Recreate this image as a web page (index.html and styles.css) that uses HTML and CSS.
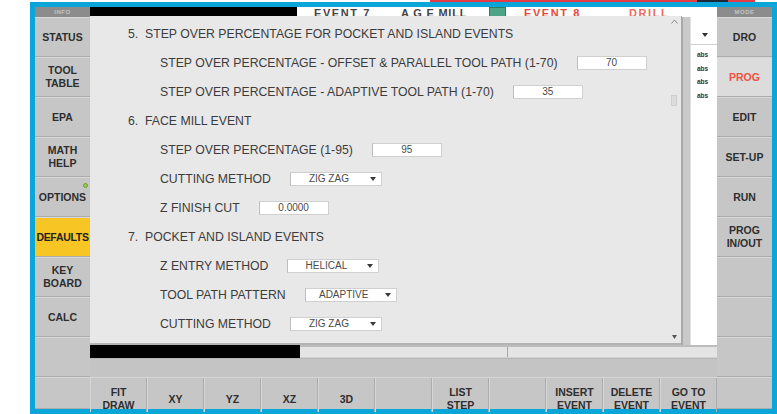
FILE: index.html
```html
<!DOCTYPE html>
<html lang="en">
<head>
<meta charset="utf-8">
<title>Program Defaults</title>
<link rel="stylesheet" href="styles.css">
</head>
<body>
<div class="topline"><span class="tl-blank"></span><span class="tl-red tl-a"></span><span class="tl-dark"></span><span class="tl-red tl-b"></span></div>
<div class="frame">
  <nav class="side">
    <div class="side-head">INFO</div>
    <div class="key">STATUS</div>
    <div class="key">TOOL<br>TABLE</div>
    <div class="key">EPA</div>
    <div class="key">MATH<br>HELP</div>
    <div class="key">OPTIONS<span class="dot"></span></div>
    <div class="key active">DEFAULTS</div>
    <div class="key">KEY<br>BOARD</div>
    <div class="key">CALC</div>
    <div class="key"></div>
    <div class="key tail"></div>
  </nav>

  <main class="center">
    <div class="topbar">
      <div class="tb-black"></div>
      <div class="tb-info">
        <span class="ev ev-cur">EVENT 7</span>
        <span class="ev ev-kind">A G E MILL</span>
        <span class="ev-flag"></span>
        <span class="ev ev-next">EVENT 8</span>
        <span class="ev ev-kind next">DRILL</span>
      </div>
    </div>

    <div class="workspace">
      <div class="prog-list">
        <div class="pl-bar"></div>
        <div class="pl-body">
          <div class="pl-drop"><span class="caret"></span></div>
          <div class="pl-row">abs</div>
          <div class="pl-row">abs</div>
          <div class="pl-row">abs</div>
          <div class="pl-row">abs</div>
        </div>
      </div>
    </div>

    <div class="statusbar">
      <div class="sb-black"></div>
      <div class="sb-track"><div class="sb-fill"></div></div>
    </div>
    <div class="band"></div>

    <div class="softkeys">
      <div class="sk">FIT<br>DRAW</div>
      <div class="sk">XY</div>
      <div class="sk">YZ</div>
      <div class="sk">XZ</div>
      <div class="sk">3D</div>
      <div class="sk"></div>
      <div class="sk">LIST<br>STEP</div>
      <div class="sk"></div>
      <div class="sk">INSERT<br>EVENT</div>
      <div class="sk">DELETE<br>EVENT</div>
      <div class="sk">GO TO<br>EVENT</div>
    </div>

    <section class="dialog">
      <div class="dlg-body">
        <div class="row head">5.&nbsp; STEP OVER PERCENTAGE FOR POCKET AND ISLAND EVENTS</div>
        <div class="row"><span>STEP OVER PERCENTAGE - OFFSET &amp; PARALLEL TOOL PATH (1-70)</span><span class="field">70</span></div>
        <div class="row"><span>STEP OVER PERCENTAGE - ADAPTIVE TOOL PATH (1-70)</span><span class="field">35</span></div>
        <div class="row head">6.&nbsp; FACE MILL EVENT</div>
        <div class="row"><span>STEP OVER PERCENTAGE (1-95)</span><span class="field">95</span></div>
        <div class="row"><span>CUTTING METHOD</span><span class="field pick">ZIG ZAG</span></div>
        <div class="row"><span>Z FINISH CUT</span><span class="field">0.0000</span></div>
        <div class="row head">7.&nbsp; POCKET AND ISLAND EVENTS</div>
        <div class="row"><span>Z ENTRY METHOD</span><span class="field pick">HELICAL</span></div>
        <div class="row"><span>TOOL PATH PATTERN</span><span class="field pick">ADAPTIVE</span></div>
        <div class="row"><span>CUTTING METHOD</span><span class="field pick">ZIG ZAG</span></div>
      </div>
      <div class="dlg-scroll">
        <svg class="sc-arrow" width="7" height="5" viewBox="0 0 7 5"><path d="M0.5 4.5 L3.5 1 L6.5 4.5" fill="none" stroke="#8a8a8a" stroke-width="1"/></svg>
        <div class="sc-thumb"></div>
        <svg class="sc-arrow down" width="5" height="4" viewBox="0 0 5 4"><path d="M0 0 H5 L2.5 4 Z" fill="#555"/></svg>
      </div>
    </section>
  </main>

  <nav class="side">
    <div class="side-head">MODE</div>
    <div class="key">DRO</div>
    <div class="key current">PROG</div>
    <div class="key">EDIT</div>
    <div class="key">SET-UP</div>
    <div class="key">RUN</div>
    <div class="key">PROG<br>IN/OUT</div>
    <div class="key"></div>
    <div class="key"></div>
    <div class="key"></div>
    <div class="key tail"></div>
  </nav>
</div>
</body>
</html>
```

FILE: styles.css
```css
* { box-sizing: border-box; }

html, body { margin: 0; padding: 0; }

body {
  width: 777px;
  height: 414px;
  overflow: hidden;
  background: #fff;
  font-family: "Liberation Sans", Arial, sans-serif;
}

/* thin accent strip above the console */
.topline { display: flex; height: 2px; }
.tl-blank { width: 430px; }
.tl-red { background: #e63a45; }
.tl-a { width: 267px; }
.tl-dark { width: 31px; background: #1c2a38; }
.tl-b { width: 27px; }

/* console frame */
.frame {
  margin-left: 30px;
  width: 747px;
  height: 412px;
  border: 5px solid #0ba6d9;
  display: grid;
  grid-template-columns: 55px 1fr 55px;
  grid-template-rows: 100%;
  background: #c6c6c6;
}

/* side key columns */
.side { display: flex; flex-direction: column; overflow: hidden; }

.side-head {
  height: 10px;
  flex: none;
  background: #8c8c8c;
  color: #c4c4c4;
  font-size: 6px;
  font-weight: bold;
  line-height: 10px;
  text-align: center;
  letter-spacing: 0.5px;
}

.key {
  position: relative;
  height: 40px;
  flex: none;
  display: flex;
  align-items: center;
  justify-content: center;
  text-align: center;
  white-space: nowrap;
  font-size: 10.5px;
  font-weight: bold;
  line-height: 13px;
  color: #2e2e2e;
  background: #c6c6c6;
  border-top: 1px solid #d7d7d7;
  border-bottom: 1px solid #acacac;
}

.key.tail { flex: 1; height: auto; }
.key.active { background: #f8c624; color: #222; letter-spacing: -0.3px; }
.key.current { background: #dcdcdc; color: #ee5243; }

.dot {
  position: absolute;
  right: 2px;
  top: 5px;
  width: 5px;
  height: 5px;
  border-radius: 50%;
  background: #9bd04a;
  border: 1px solid #6e9c2e;
}

/* centre column */
.center {
  position: relative;
  display: flex;
  flex-direction: column;
  min-width: 0;
  height: 402px;
}

.topbar {
  height: 10px;
  flex: none;
  display: flex;
  background: #fff;
}

.tb-black { width: 208px; background: #000; }

.tb-info {
  flex: 1;
  display: flex;
  padding-left: 17px;
  font-size: 11px;
  font-weight: bold;
  line-height: 13px;
  white-space: nowrap;
}

.ev { letter-spacing: 1.6px; color: #444; }
.ev-cur { width: 87px; }
.ev-kind { width: 88px; letter-spacing: 0.8px; }
.ev-flag {
  width: 17px;
  height: 10px;
  margin-right: 18px;
  background: #4da487;
  border: 1px solid #2f7d63;
}
.ev-next { width: 105px; color: #e8473c; }
.ev-kind.next { color: #ee6a5e; letter-spacing: 1.6px; }

.workspace {
  height: 328px;
  flex: none;
  display: flex;
  justify-content: flex-end;
  background: #e8e8e8;
}

.prog-list { width: 35px; display: flex; }
.pl-bar {
  width: 9px;
  background: #c9c9c9;
  border-left: 1px solid #a8a8a8;
  border-right: 1px solid #e0e0e0;
}
.pl-body { flex: 1; background: #fff; }
.pl-drop {
  height: 28px;
  display: flex;
  align-items: flex-end;
  justify-content: flex-end;
  padding: 0 9px 7px 0;
  border-bottom: 1px solid #d0d0d0;
}
.caret {
  width: 0;
  height: 0;
  border-left: 3px solid transparent;
  border-right: 3px solid transparent;
  border-top: 4px solid #333;
}
.pl-body .pl-drop + .pl-row { margin-top: 3px; }
.pl-row {
  height: 13.5px;
  line-height: 13.5px;
  padding-left: 6px;
  font-size: 6.5px;
  font-weight: bold;
  color: #333;
}

.statusbar { height: 13px; flex: none; display: flex; }
.sb-black { width: 210px; background: #000; }
.sb-track {
  flex: 1;
  background: #e4e4e4;
  border-top: 2px solid #bcbcbc;
  border-bottom: 1px solid #d2d2d2;
}
.sb-fill { width: 208px; height: 100%; border-right: 1px solid #a5a5a5; }

.band {
  height: 19px;
  flex: none;
  background: #c4c4c4;
  border-top: 1px solid #b5b5b5;
}

.softkeys {
  height: 32px;
  flex: none;
  display: grid;
  grid-template-columns: repeat(11, 1fr);
  border-top: 1px solid #d6d6d6;
}

.sk {
  display: flex;
  align-items: center;
  justify-content: center;
  padding-top: 8px;
  text-align: center;
  white-space: nowrap;
  font-size: 10.5px;
  font-weight: bold;
  line-height: 13px;
  color: #2e2e2e;
  border-left: 1px solid #d6d6d6;
  border-right: 1px solid #adadad;
}

/* defaults dialog, floating over the program view */
.dialog {
  position: absolute;
  top: 9px;
  left: 0;
  width: 592px;
  height: 329px;
  display: flex;
  background: #e8e8e8;
  border-right: 1px solid #a9a9a9;
  border-bottom: 2px solid #b4b4b4;
}

.dlg-body { flex: 1; padding-top: 3px; }

.row {
  height: 29px;
  display: flex;
  align-items: center;
  padding-left: 70px;
  font-size: 12.25px;
  color: #3c3c3c;
  white-space: nowrap;
}
.row.head { padding-left: 38px; }

.field {
  position: relative;
  width: 70px;
  height: 14px;
  margin-left: 19px;
  display: flex;
  align-items: center;
  justify-content: center;
  background: #fff;
  border: 1px solid #d0d0d0;
  border-left-color: #bdbdbd;
  font-size: 10px;
  color: #4a4a4a;
}

.field.pick { width: 92px; padding-right: 14px; }
.field.pick::after {
  content: "";
  position: absolute;
  right: 5px;
  top: 4px;
  border-left: 3.5px solid transparent;
  border-right: 3.5px solid transparent;
  border-top: 4px solid #3a3a3a;
}

.dlg-scroll {
  width: 14px;
  display: flex;
  flex-direction: column;
  align-items: center;
  padding: 3px 0 4px;
}
.sc-thumb {
  width: 6px;
  height: 11px;
  margin-top: 71px;
  background: #dcdcdc;
  border: 1px solid #cdcdcd;
}
.sc-arrow.down { margin-top: auto; }
```
